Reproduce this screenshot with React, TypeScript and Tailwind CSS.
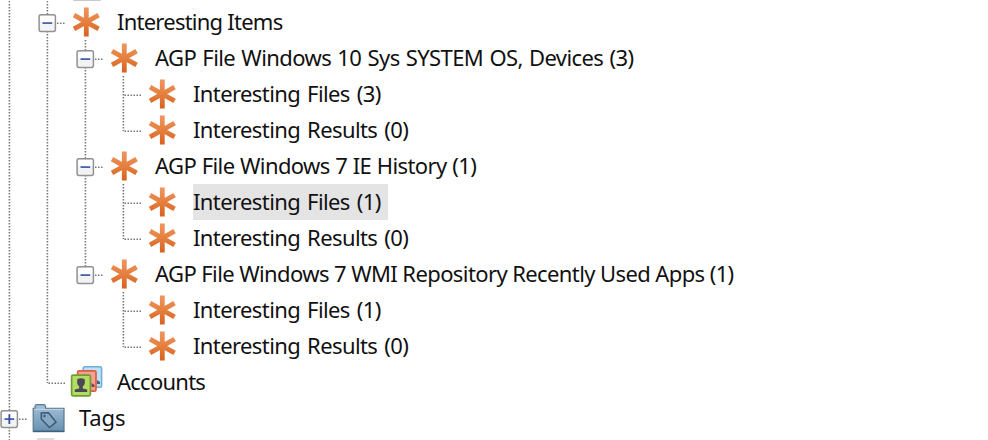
import React from "react";

type Guide = "blank" | "line" | "tee" | "corner" | "minus" | "minusLast" | "plus";
type IconName = "star" | "accounts" | "tags";

interface Node {
  guides: Guide[];
  icon: IconName;
  label: string;
  text: string;
  selected?: boolean;
}

const leafText = "tracking-[-0.6px] [word-spacing:1.8px]";

const nodes: Node[] = [
  { guides: ["line", "minus"], icon: "star", label: "Interesting Items", text: "tracking-[-0.76px]" },
  { guides: ["line", "line", "minus"], icon: "star", label: "AGP File Windows 10 Sys SYSTEM OS, Devices (3)", text: "tracking-[-0.6px] [word-spacing:1.1px]" },
  { guides: ["line", "line", "line", "tee"], icon: "star", label: "Interesting Files (3)", text: leafText },
  { guides: ["line", "line", "line", "corner"], icon: "star", label: "Interesting Results (0)", text: leafText },
  { guides: ["line", "line", "minus"], icon: "star", label: "AGP File Windows 7 IE History (1)", text: "tracking-[-0.6px] [word-spacing:0.4px]" },
  { guides: ["line", "line", "line", "tee"], icon: "star", label: "Interesting Files (1)", text: leafText, selected: true },
  { guides: ["line", "line", "line", "corner"], icon: "star", label: "Interesting Results (0)", text: leafText },
  { guides: ["line", "line", "minusLast"], icon: "star", label: "AGP File Windows 7 WMI Repository Recently Used Apps (1)", text: "tracking-[-0.6px]" },
  { guides: ["line", "line", "blank", "tee"], icon: "star", label: "Interesting Files (1)", text: leafText },
  { guides: ["line", "line", "blank", "corner"], icon: "star", label: "Interesting Results (0)", text: leafText },
  { guides: ["line", "corner"], icon: "accounts", label: "Accounts", text: "tracking-[-0.75px]" },
  { guides: ["plus"], icon: "tags", label: "Tags", text: "tracking-[-0.1px]" },
];

function GuideCell({ kind }: { kind: Guide }) {
  const toggle = kind.startsWith("minus") || kind === "plus";
  const half = kind === "corner" || kind === "minusLast";
  return (
    <svg className="h-9 w-[38px] shrink-0" viewBox="0 0 38 36">
      <g stroke="#777" strokeWidth="1.6" strokeDasharray="1.5 1.5" fill="none">
        {kind !== "blank" && <path d={half ? "M19.4 0V19" : "M19.4 0V36"} />}
        {(kind === "tee" || kind === "corner") && <path d="M20.5 19.2H38" />}
        {toggle && <path d="M29 19.2H38" />}
      </g>
      {toggle && (
        <>
          <rect x="11.1" y="10.8" width="16.3" height="16.6" rx="1.8" fill="#f3f3f3" stroke="#929292" strokeWidth="1.5" />
          <rect x="12.3" y="12" width="13.9" height="6" fill="#fff" />
          <path d="M14.5 19.1H24.2" stroke="#4a63ae" strokeWidth="1.8" />
          {kind === "plus" && <path d="M19.35 14.2V24" stroke="#354f9f" strokeWidth="1.8" />}
        </>
      )}
    </svg>
  );
}

function StarIcon() {
  return (
    <svg className="h-9 w-10" viewBox="0 0 40 36">
      <defs>
        <linearGradient id="star" gradientUnits="userSpaceOnUse" x1="0" y1="3" x2="0" y2="33">
          <stop offset="0" stopColor="#ef9660" />
          <stop offset="0.5" stopColor="#e5803f" />
          <stop offset="1" stopColor="#d95f1d" />
        </linearGradient>
      </defs>
      <path d="M20.3 3.6V32.4M8 11.2L32.6 24.9M32.6 11.2L8 24.9" stroke="url(#star)" strokeWidth="4.8" />
    </svg>
  );
}

function AccountsIcon() {
  return (
    <svg className="h-9 w-10" viewBox="0 0 40 36">
      <rect x="17.2" y="2.8" width="18.4" height="20.4" rx="1.5" fill="#b9e2f8" stroke="#6eadd5" strokeWidth="1.5" />
      <path d="M31 16v4h3v-2z" fill="#45617a" />
      <rect x="11.6" y="6.8" width="18.4" height="20.4" rx="1.5" fill="#f4a18e" stroke="#df5b49" strokeWidth="1.7" />
      <path d="M25.5 19v4h3v-2z" fill="#704844" />
      <rect x="5.6" y="11.2" width="18.8" height="20.6" rx="1.5" fill="#b4dc63" stroke="#719c34" strokeWidth="1.7" />
      <path d="M11.2 15.2q3.8-2 7.6 0v4q-.5 2.5-2 3v2.2l4.4 1.1V28H8.8v-2.5l4.4-1.1v-2.2q-1.5-.5-2-3z" fill="#4a4852" />
    </svg>
  );
}

function TagsIcon() {
  return (
    <svg className="h-9 w-10" viewBox="0 0 40 36">
      <defs>
        <linearGradient id="folder" x1="0" y1="0" x2="0" y2="1">
          <stop offset="0" stopColor="#a4c2d8" />
          <stop offset="1" stopColor="#6790b0" />
        </linearGradient>
      </defs>
      <path d="M5.2 31.2V8.3H7V6.4Q7.2 4.6 9 4.6H15.5Q17.3 4.6 17.6 6.4V8.3H36V31.2Z" fill="url(#folder)" stroke="#57788f" strokeWidth="1.2" />
      <path d="M6 9.3H35.3" stroke="#c6dae6" strokeWidth="1" />
      <path d="M5 31.5H36.4" stroke="#426179" strokeWidth="1.4" />
      <path d="M13.3 12.9L20.5 12.8L28 22.1L21.5 27.5L13.3 19Z" fill="#86a9c3" stroke="#3e5873" strokeWidth="1.5" />
      <circle cx="16.4" cy="16" r="1.2" fill="#3e5873" />
    </svg>
  );
}

const icons = { star: StarIcon, accounts: AccountsIcon, tags: TagsIcon };

function TreeRow({ node }: { node: Node }) {
  const Icon = icons[node.icon];
  return (
    <div className="flex h-9 items-center">
      {node.guides.map((g, i) => <GuideCell key={i} kind={g} />)}
      <span className="mr-[11px] h-9 w-10 shrink-0"><Icon /></span>
      <span className={`h-9 whitespace-nowrap pr-[7px] leading-[34px] ${node.selected ? "bg-[#e4e4e4]" : ""} ${node.text}`}>
        {node.label}
      </span>
    </div>
  );
}

export default function App() {
  return (
    <div className="h-[440px] w-[988px] overflow-hidden bg-white font-['Noto_Sans',sans-serif] text-[22px] text-[#111]">
      <div className="-ml-[10px]">
        <div className="flex h-1">
          <svg className="h-1 w-[76px]" viewBox="0 0 76 4">
            <path d="M19.4 1V4M57.4 1V4" stroke="#858585" strokeWidth="1.4" strokeDasharray="1.5 1.5" />
          </svg>
          <div className="ml-[7px] h-px w-7 rounded-b bg-[#c9c9c9]" />
        </div>
        {nodes.map((n, i) => <TreeRow key={i} node={n} />)}
        <div className="flex h-1">
          <svg className="h-1 w-[38px]" viewBox="0 0 38 4">
            <path d="M19.4 0V4" stroke="#858585" strokeWidth="1.4" strokeDasharray="1.5 1.5" />
          </svg>
          <div className="ml-[9px] mt-[2px] h-[2px] w-[17px] bg-[#dcdcdc]" />
        </div>
      </div>
    </div>
  );
}
